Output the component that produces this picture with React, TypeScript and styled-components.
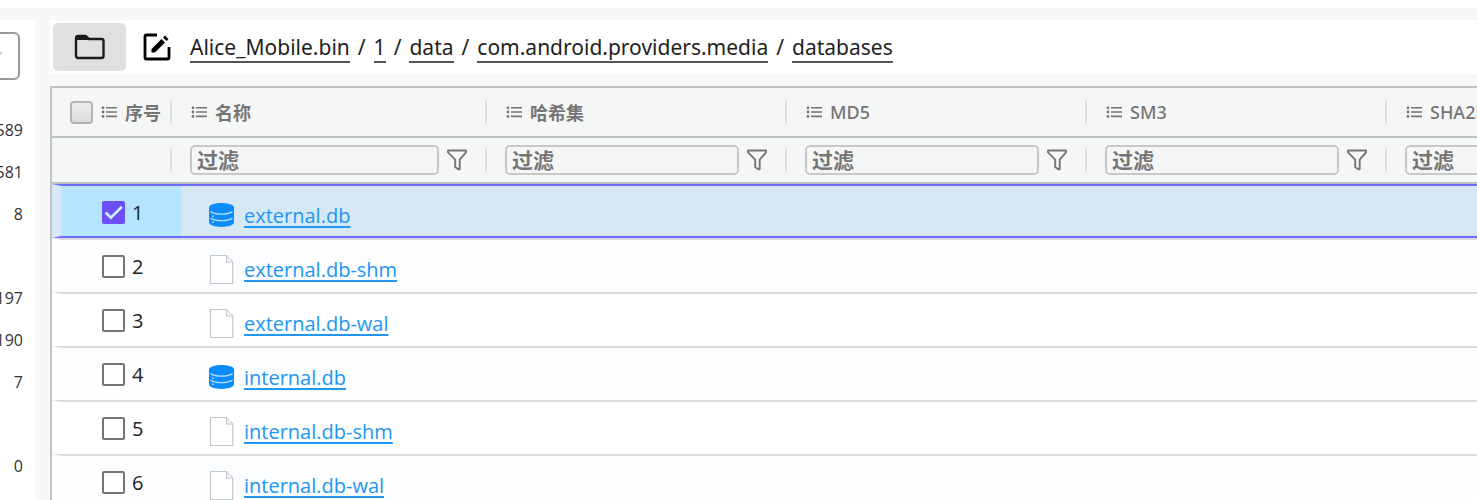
import React from 'react';
import styled, { createGlobalStyle, css } from 'styled-components';

const Global = createGlobalStyle`
  * { box-sizing: border-box; }
  body {
    margin: 0;
    background: #f8f8f8;
    color: #222;
    font-family: "Open Sans", "Noto Sans CJK SC", sans-serif;
    font-size: 20px;
  }
`;

const Page = styled.div`
  min-height: 100vh;
  max-height: 100vh;
  overflow: hidden;
  display: flex;
  flex-direction: column;
`;

const TopStrip = styled.header`
  height: 8px;
  flex: none;
  background: #fff;
`;

const Body = styled.div`
  flex: 1;
  display: flex;
  gap: 15px;
  min-height: 0;
  padding-top: 12px;
`;

const Sidebar = styled.aside`
  width: 35px;
  flex: none;
  display: flex;
  justify-content: flex-end;
  overflow: hidden;
  background: #fff;
`;

const SidebarInner = styled.div`
  width: 240px;
  flex: none;
  padding: 12px 12px 0 0;
`;

const SelectWrap = styled.div`
  position: relative;
  margin: 0 3px 0 0;
`;

const CaseSelect = styled.select`
  appearance: none;
  display: block;
  width: 100%;
  height: 48px;
  border: 2px solid #999;
  border-radius: 6px;
  background: #fff;
`;

const SelectArrow = styled.svg`
  position: absolute;
  right: 18px;
  top: 18px;
  pointer-events: none;
`;

const Counts = styled.ul`
  list-style: none;
  margin: 29px 0 0;
  padding: 0;
`;

const Count = styled.li`
  height: 42px;
  font-size: 16px;
  line-height: 42px;
  text-align: right;
  color: #333;
`;

const Main = styled.main`
  flex: 1;
  min-width: 0;
  display: flex;
  flex-direction: column;
  gap: 12px;
`;

const Toolbar = styled.div`
  display: flex;
  align-items: center;
  height: 54px;
  flex: none;
  padding-left: 3px;
  background: #fff;
`;

const FolderButton = styled.button`
  display: grid;
  place-items: center;
  width: 73px;
  height: 48px;
  padding: 0;
  border: 0;
  border-radius: 5px;
  background: #e0e0e0;
`;

const EditButton = styled.button`
  display: grid;
  place-items: center;
  width: 28px;
  height: 28px;
  margin: 0 19px 0 17px;
  padding: 0;
  border: 0;
  background: none;
`;

const Crumbs = styled.nav`
  display: flex;
  gap: 8px;
  padding-top: 1px;
  font-family: "Noto Sans", "Noto Sans CJK SC", sans-serif;
  font-size: 21px;
  line-height: 28px;
  white-space: nowrap;
`;

const Crumb = styled.a`
  color: #222;
  text-decoration: none;
  border-bottom: 2px solid #555;
`;

const TableFrame = styled.div`
  flex: 1;
  min-height: 0;
  overflow: hidden;
  border: 2px solid #bdc3c7;
  border-width: 2px 0 0 2px;
  background: #fff;
`;

const Table = styled.table`
  width: 1644px;
  table-layout: fixed;
  border-collapse: separate;
  border-spacing: 0;
`;

const HeadCell = styled.th<{ $filter?: boolean }>`
  height: ${p => (p.$filter ? 46 : 50)}px;
  padding: 0 9px 0 0;
  border-bottom: 2px solid #bdc3c7;
  background: #f5f7f7;
  color: #757575;
  font-family: "Noto Sans", "Noto Sans CJK SC", sans-serif;
  font-size: 18px;
  font-weight: 500;
  text-align: left;
  white-space: nowrap;
`;

const HeadInner = styled.div<{ $lead?: boolean; $filter?: boolean }>`
  display: flex;
  align-items: center;
  gap: 8px;
  height: ${p => (p.$filter ? 30 : 24)}px;
  padding: 0 ${p => (p.$filter ? 20 : 0)}px 0 ${p => (p.$lead ? 18 : p.$filter ? 9 : 10)}px;
  background: linear-gradient(#dde1e3, #dde1e3) right center / 2px 24px no-repeat;
`;

const HeadTitle = styled.span<{ $strong?: boolean }>`
  font-weight: ${p => (p.$strong ? 700 : 500)};
`;

const AllBox = styled.input`
  appearance: none;
  flex: none;
  width: 23px;
  height: 23px;
  margin: 0;
  border: 2px solid #b4b4b4;
  border-radius: 4px;
  background: linear-gradient(#eee, #dcdcdc);
`;

const FilterInput = styled.input`
  flex: 1;
  min-width: 0;
  height: 30px;
  padding: 0 5px;
  border: 2px solid #c8c8c8;
  border-radius: 5px;
  background: #f5f7f7;
  font: 700 21px "Noto Sans", "Noto Sans CJK SC", sans-serif;
  &::placeholder { color: #757575; opacity: 1; }
`;

const FunnelButton = styled.button`
  display: block;
  flex: none;
  width: 20px;
  height: 24px;
  padding: 0;
  border: 0;
  background: none;
`;

const Cell = styled.td`
  height: 54px;
  padding: 0;
  border-top: 2px solid #d9dbde;
`;

const Row = styled.tr<{ $selected: boolean }>`
  background: #fff;
  &:nth-child(even) { background: #fcfdfe; }
  ${p => p.$selected && css`
    background: #d6e8f3;
    ${Cell} {
      border-top-color: #6f6bff;
      border-bottom: 2px solid #6f6bff;
    }
  `}
`;

const IndexCell = styled(Cell)`
  border-left: 9px solid transparent;
`;

const IndexLabel = styled.label<{ $selected: boolean }>`
  display: flex;
  align-items: center;
  gap: 7px;
  height: ${p => (p.$selected ? 50 : 52)}px;
  padding: ${p => (p.$selected ? 2 : 0)}px 0 0 41px;
  background: ${p => (p.$selected ? '#b5e4ff' : 'transparent')};
`;

const Tick = styled.span`
  display: grid;
  width: 23px;
  height: 23px;
  > * { grid-area: 1 / 1; }
`;

const TickBox = styled.input`
  appearance: none;
  width: 23px;
  height: 23px;
  margin: 0;
  border: 2px solid #757575;
  border-radius: 2px;
  background: #fff;
  &:checked { border-color: #6c4ff6; background: #6c4ff6; }
`;

const NameInner = styled.div<{ $selected: boolean }>`
  display: flex;
  align-items: center;
  gap: 9px;
  padding: ${p => (p.$selected ? 10 : 8)}px 0 0 27px;
`;

const FileLink = styled.a`
  color: #2196f3;
  text-decoration: underline;
  text-decoration-thickness: 2px;
  text-underline-offset: 3px;
  text-decoration-skip-ink: none;
  line-height: 28px;
`;

const ListIcon = () => (
  <svg width="16" height="12" viewBox="0 0 16 12" fill="#757575" aria-hidden="true">
    <path d="M5 1h11v1.600H5zM5 5.200h11v1.600H5zM5 9.600h11v1.600H5z" />
    <circle cx="2" cy="1.8" r="1.4" /><circle cx="2" cy="6" r="1.4" /><circle cx="2" cy="10.4" r="1.4" />
  </svg>
);

const Funnel = () => (
  <svg width="20" height="24" viewBox="0 0 20 24" fill="none" stroke="#757575" strokeWidth="1.9" strokeLinejoin="round" aria-hidden="true">
    <path d="M1 2.500h18v1.800l-6.300 7.400v9.500h-1.500l-3-2.200v-7.300L1 4.300z" />
  </svg>
);

const DbIcon = () => (
  <svg width="27" height="28" viewBox="0 0 27 28" aria-hidden="true">
    <path d="M1 5.500C1 -.500 26 -.500 26 5.500v14.500c0 6.500-25 6.500-25 0z" fill="#0a8cff" />
    <path d="M2.500 9.500c4 3.500 18 3.500 22 0M2.500 16c4 3.500 18 3.500 22 0" fill="none" stroke="#b9ddf8" strokeWidth="1.400" />
    <path d="M5 13.500v1.600M5 19.500v1.600" stroke="#d6ecff" strokeWidth="1.400" />
  </svg>
);

const FileIcon = () => (
  <svg width="27" height="32" viewBox="0 0 27 32" aria-hidden="true">
    <path d="M2.500 1.500h16l6.200 6.500v21.500h-22.200z" fill="#fff" stroke="#c3c8ce" strokeWidth="1.200" />
    <path d="M18.500 1.500v6.500h6" fill="#f4f5f6" stroke="#c3c8ce" strokeWidth="1.200" />
  </svg>
);

const crumbs = ['Alice_Mobile.bin', '1', 'data', 'com.android.providers.media', 'databases'];
const counts = ['589', '581', '8', '', '197', '190', '7', '', '0'];
const columns = [
  { title: '名称', width: 315, strong: true },
  { title: '哈希集', width: 300, strong: true },
  { title: 'MD5', width: 300, strong: false },
  { title: 'SM3', width: 300, strong: false },
  { title: 'SHA256', width: 300, strong: false },
];
const files = [
  'external.db', 'external.db-shm', 'external.db-wal',
  'internal.db', 'internal.db-shm', 'internal.db-wal',
];

export default function App() {
  return (
    <Page>
      <Global />
      <TopStrip />
      <Body>
        <Sidebar>
          <SidebarInner>
            <SelectWrap>
              <CaseSelect aria-label="案件" />
              <SelectArrow width="10" height="10" viewBox="0 0 10 10" fill="none" stroke="#bbb" strokeWidth="1.500">
                <path d="M0 2l5 5 5-5" />
              </SelectArrow>
            </SelectWrap>
            <Counts>{counts.map((c, i) => <Count key={i}>{c}</Count>)}</Counts>
          </SidebarInner>
        </Sidebar>
        <Main>
          <Toolbar>
            <FolderButton aria-label="文件夹">
              <svg width="32" height="26" viewBox="0 0 32 26" aria-hidden="true">
                <path d="M4 2h7.500l3.500 3h12.500a2 2 0 0 1 2 2v15a2 2 0 0 1-2 2H4a2 2 0 0 1-2-2V4a2 2 0 0 1 2-2z" fill="none" stroke="#1b1b1b" strokeWidth="2.400" strokeLinejoin="round" />
                <path d="M1.500 4a3 3 0 0 1 3-2.500h7.500l4 3.500v1H1.500z" fill="#1b1b1b" />
              </svg>
            </FolderButton>
            <EditButton aria-label="编辑">
              <svg width="28" height="28" viewBox="0 0 28 28" aria-hidden="true">
                <path d="M14 2H3.500A1.500 1.500 0 0 0 2 3.500v21A1.500 1.500 0 0 0 3.500 26h21a1.500 1.500 0 0 0 1.500-1.500V14" fill="none" stroke="#000" strokeWidth="2.800" />
                <path d="M8.500 16L18.500 6l3.500 3.500-10 10H8.500zM20 4.500l2-2 3.500 3.500-2 2z" fill="#000" />
              </svg>
            </EditButton>
            <Crumbs aria-label="路径">
              {crumbs.map((c, i) => (
                <React.Fragment key={c}>
                  {i > 0 && <span>/</span>}
                  <Crumb href="#">{c}</Crumb>
                </React.Fragment>
              ))}
            </Crumbs>
          </Toolbar>
          <TableFrame>
            <Table>
              <colgroup>
                <col style={{ width: 129 }} />
                {columns.map(c => <col key={c.title} style={{ width: c.width }} />)}
              </colgroup>
              <thead>
                <tr>
                  <HeadCell>
                    <HeadInner $lead>
                      <AllBox type="checkbox" aria-label="全选" />
                      <ListIcon />
                      <HeadTitle $strong>序号</HeadTitle>
                    </HeadInner>
                  </HeadCell>
                  {columns.map(c => (
                    <HeadCell key={c.title}>
                      <HeadInner>
                        <ListIcon />
                        <HeadTitle $strong={c.strong}>{c.title}</HeadTitle>
                      </HeadInner>
                    </HeadCell>
                  ))}
                </tr>
                <tr>
                  <HeadCell $filter><HeadInner $filter /></HeadCell>
                  {columns.map(c => (
                    <HeadCell $filter key={c.title}>
                      <HeadInner $filter>
                        <FilterInput placeholder="过滤" aria-label={c.title} />
                        <FunnelButton aria-label="筛选"><Funnel /></FunnelButton>
                      </HeadInner>
                    </HeadCell>
                  ))}
                </tr>
              </thead>
              <tbody>
                {files.map((f, i) => (
                  <Row key={f} $selected={i === 0}>
                    <IndexCell>
                      <IndexLabel $selected={i === 0}>
                        <Tick>
                          <TickBox type="checkbox" defaultChecked={i === 0} />
                          {i === 0 && (
                            <svg width="23" height="23" viewBox="0 0 22 22" fill="none" stroke="#d4efff" strokeWidth="2.400" aria-hidden="true">
                              <path d="M3.500 11l5 5L19 5.500" />
                            </svg>
                          )}
                        </Tick>
                        {i + 1}
                      </IndexLabel>
                    </IndexCell>
                    <Cell>
                      <NameInner $selected={i === 0}>
                        {f.endsWith('.db') ? <DbIcon /> : <FileIcon />}
                        <FileLink href="#">{f}</FileLink>
                      </NameInner>
                    </Cell>
                    <Cell /><Cell /><Cell /><Cell />
                  </Row>
                ))}
              </tbody>
            </Table>
          </TableFrame>
        </Main>
      </Body>
    </Page>
  );
}
